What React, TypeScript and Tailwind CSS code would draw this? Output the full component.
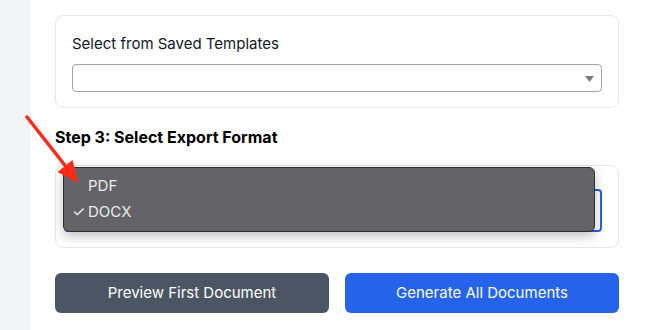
import React from "react";

export default function App() {
  return (
    <div
      className="relative flex h-[330px] w-[645px] overflow-hidden bg-white"
      style={{ fontFamily: "Inter, 'Noto Sans', sans-serif" }}
    >
      <div className="w-[31px] shrink-0 bg-[#f3f4f6]" />
      <div className="flex flex-1 flex-col pl-6 pr-[26px] pt-[15px]">
        <div className="rounded-lg border border-[#e5e7eb] px-4 pb-[15px] pt-[17px]">
          <div className="text-[15px] leading-[22px] text-[#111827]">Select from Saved Templates</div>
          <div className="relative mt-[9px] h-[28px] rounded border border-[#a3a3a3] bg-white">
            <svg className="absolute right-[7px] top-[11px]" width="9" height="6" viewBox="0 0 9 6">
              <path d="M0 0 L9 0 L4.5 6 Z" fill="#7b7b7b" />
            </svg>
          </div>
        </div>
        <div className="mt-[17px] text-[16px] font-bold leading-6 text-black">Step 3: Select Export Format</div>
        <div className="relative mt-[16px] h-[83px] rounded-lg border border-[#e5e7eb] pl-[8px] pr-4 pt-[23px]">
          <div className="h-[43px] rounded border-2 border-[#2563eb] bg-white" />
          <div className="absolute left-[7px] top-[1px] w-[532px] rounded-md border border-[#2e2e30] bg-[#636368] py-[5px] shadow-[0_4px_12px_rgba(0,0,0,0.25)]">
            <div className="flex h-[26px] items-center pl-[24px] text-[15px] text-[#ececec]">PDF</div>
            <div className="relative flex h-[27px] items-center pl-[24px] text-[15px] text-[#ececec]">
              <span className="absolute left-[8px] text-[15px]">✓</span>
              DOCX
            </div>
          </div>
        </div>
        <div className="mt-[25px] flex gap-4">
          <button className="h-[40px] flex-1 rounded-md bg-[#4b5563] text-[15px] text-white">Preview First Document</button>
          <button className="h-[40px] flex-1 rounded-md bg-[#2563eb] text-[15px] text-white">Generate All Documents</button>
        </div>
      </div>
      <svg className="pointer-events-none absolute left-0 top-0" width="645" height="330">
        <line x1="27" y1="117" x2="67" y2="168" stroke="#ff2a17" strokeWidth="3.5" strokeLinecap="round" />
        <polygon points="78,183 57.5,172 72.5,160" fill="#ff2a17" />
      </svg>
    </div>
  );
}
